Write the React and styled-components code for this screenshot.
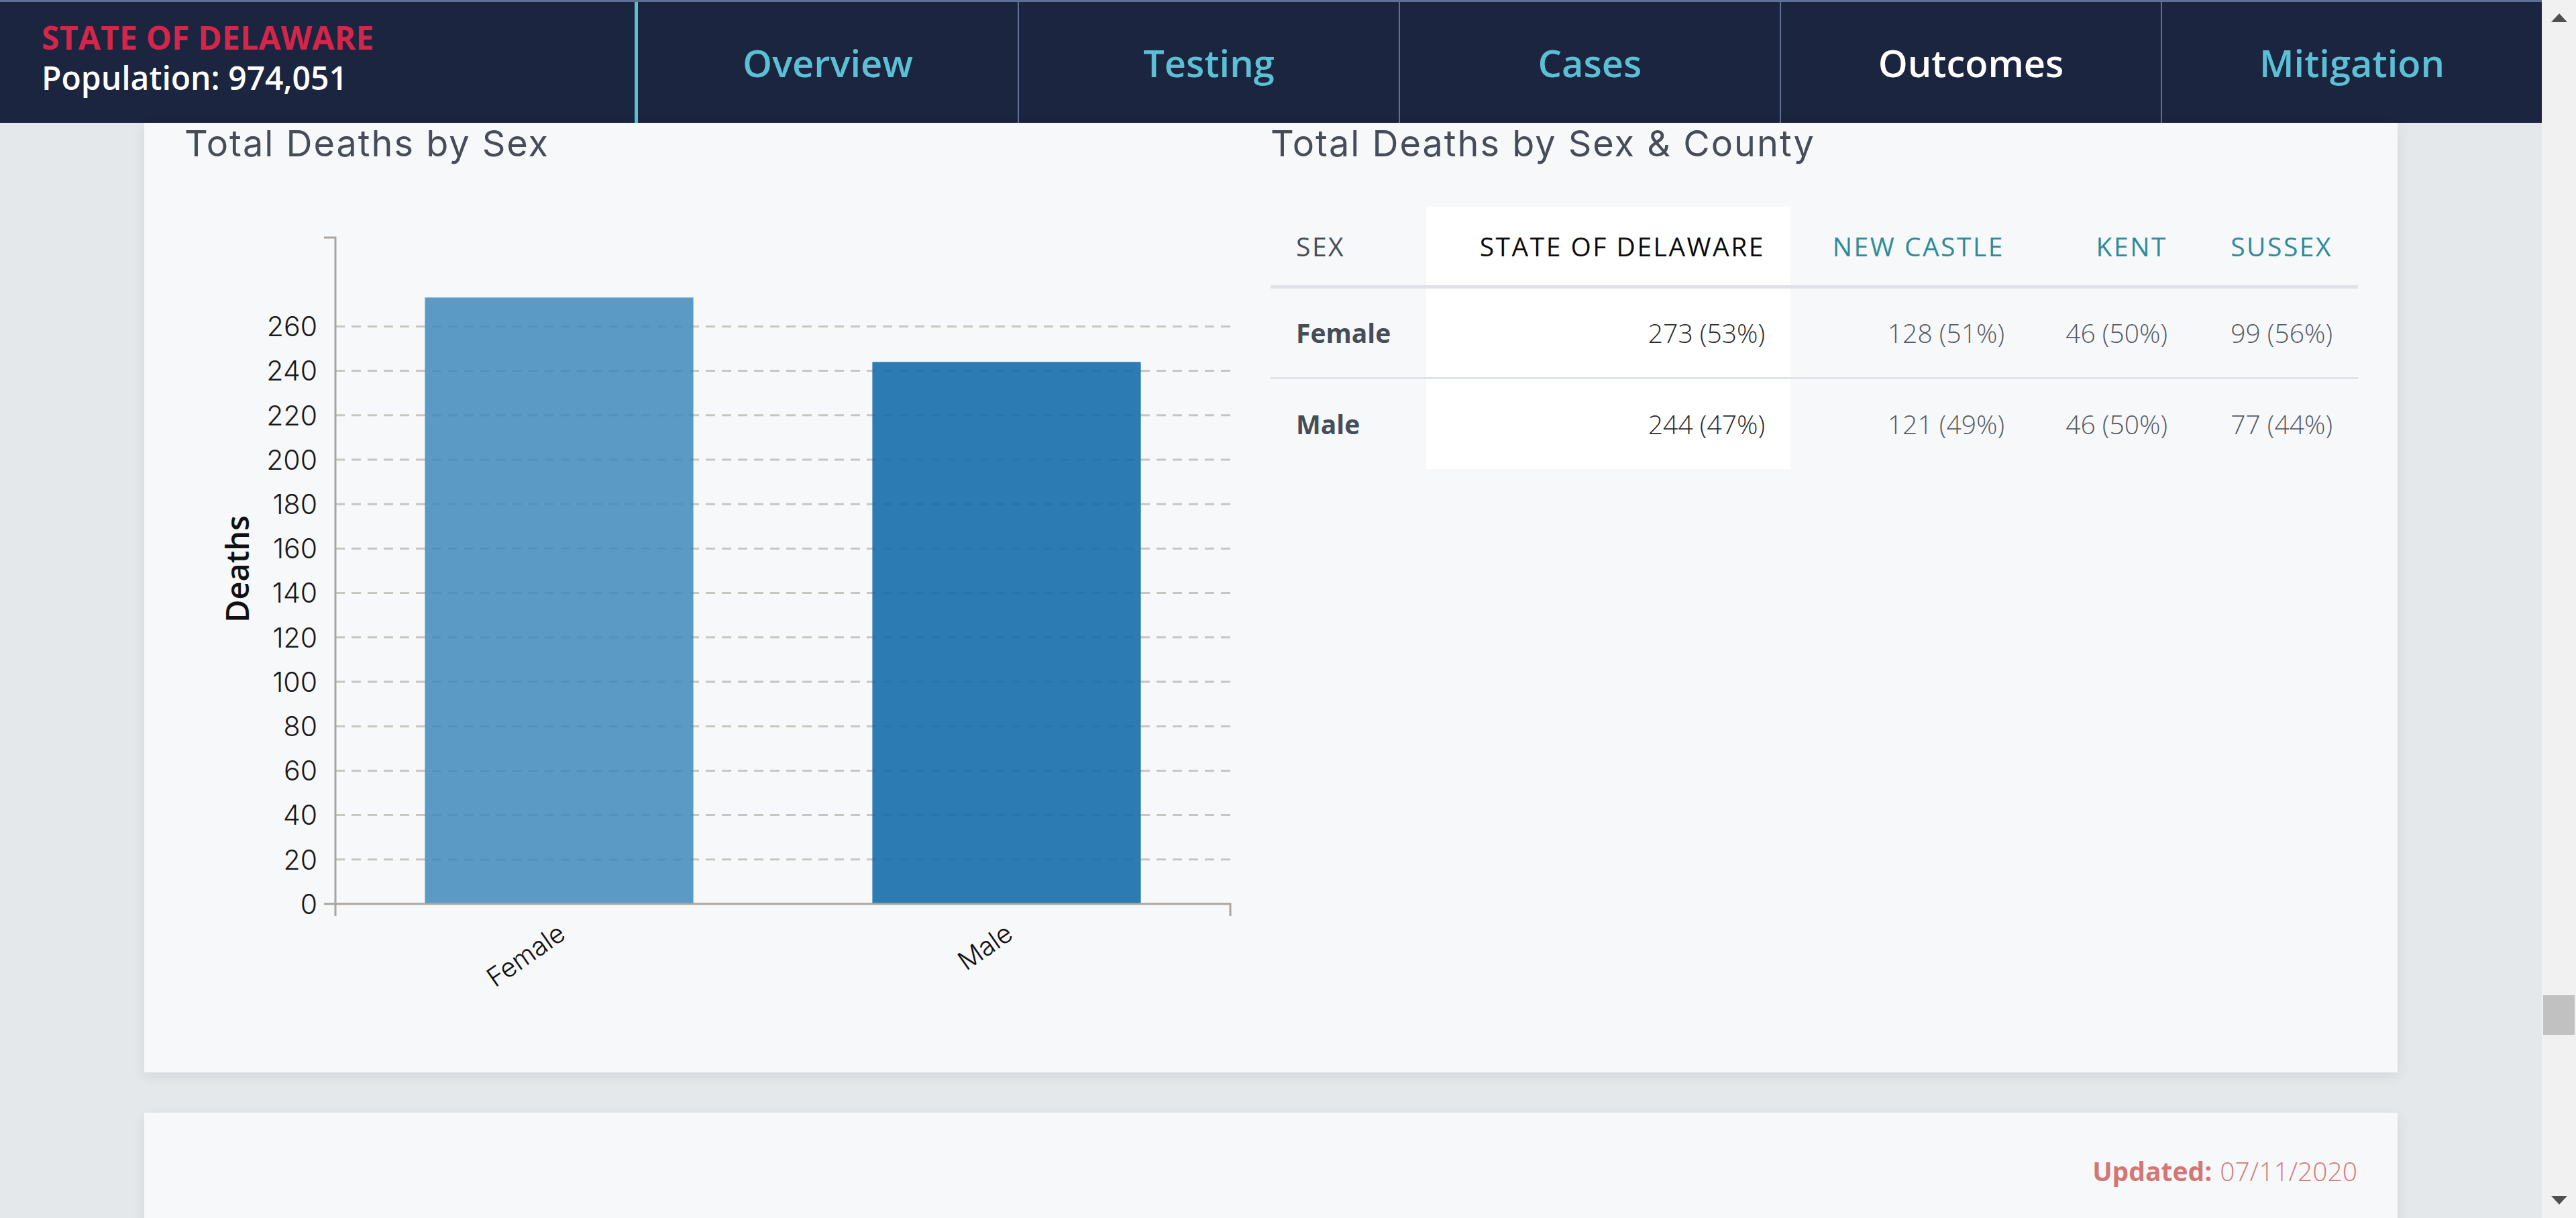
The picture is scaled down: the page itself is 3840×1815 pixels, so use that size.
import React from "react";
import styled, { createGlobalStyle } from "styled-components";

const GlobalStyle = createGlobalStyle`
  html, body {
    margin: 0;
    padding: 0;
    overflow: hidden;
    font-family: "Open Sans", "Liberation Sans", sans-serif;
  }
  * {
    box-sizing: border-box;
  }
`;

const Shell = styled.div`
  display: flex;
  height: 100vh;
  overflow: hidden;
`;

const Main = styled.div`
  flex: 1;
  display: flex;
  flex-direction: column;
  background-color: #e4e8eb;
  overflow: hidden;
`;

const Header = styled.header`
  display: flex;
  flex-shrink: 0;
  height: 183px;
  background-color: #1b253f;
  border-top: 3px solid #5e7096;
`;

const Brand = styled.div`
  width: 951px;
  padding: 23px 0 0 62px;
  border-right: 5px solid #5bc0d4;
`;

const StateName = styled.div`
  font-size: 48px;
  line-height: 60px;
  font-weight: 700;
  letter-spacing: 0.2px;
  color: #d5254a;
`;

const Population = styled.div`
  font-size: 48px;
  line-height: 60px;
  font-weight: 600;
  color: #ffffff;
`;

const Nav = styled.nav`
  flex: 1;
  display: flex;
`;

const NavItem = styled.a`
  flex: 1;
  display: flex;
  align-items: center;
  justify-content: center;
  font-size: 56px;
  font-weight: 600;
  color: ${(p) => (p.$active ? "#ffffff" : "#5bc0d4")};
  text-decoration: none;

  & + & {
    border-left: 2px solid #5e7096;
  }
`;

const Content = styled.div`
  padding: 0 215px;
`;

const Card = styled.section`
  background-color: #f7f8fa;
  box-shadow: 0 6px 18px rgba(30, 40, 60, 0.09);
  margin-top: ${(p) => (p.$first ? "0" : "60px")};
  padding: ${(p) => (p.$first ? "0 60px 63px" : "58px 60px 60px")};
`;

const ChartGrid = styled.div`
  display: grid;
  grid-template-columns: 1619px 1621px;
`;

const Column = styled.div`
  display: flex;
  flex-direction: column;
`;

const Title = styled.h2`
  margin: 0;
  font-family: Inter, "Noto Sans", sans-serif;
  font-size: 54px;
  line-height: 62px;
  font-weight: 400;
  letter-spacing: 2px;
  color: #464d59;
`;

const Table = styled.table`
  margin-top: 63px;
  width: 1621px;
  border-collapse: collapse;
  table-layout: fixed;
`;

const HeadCell = styled.th`
  height: 119px;
  padding: 0 38px;
  font-size: 39px;
  font-weight: ${(p) => (p.$state ? 500 : 400)};
  letter-spacing: 2.5px;
  text-align: ${(p) => (p.$left ? "left" : "right")};
  color: ${(p) => (p.$state ? "#0c0c0c" : p.$left ? "#464d59" : "#2e8b9b")};
  background-color: ${(p) => (p.$state ? "#ffffff" : "transparent")};
  border-bottom: 5px solid #dfe2e6;
  white-space: nowrap;
`;

const BodyRow = styled.tr`
  &:not(:last-child) > td {
    border-bottom: 3px solid #dfe2e6;
  }
`;

const Cell = styled.td`
  height: 136px;
  padding: 0 38px;
  font-size: 39px;
  font-weight: ${(p) => (p.$label ? 700 : 300)};
  text-align: ${(p) => (p.$label ? "left" : "right")};
  color: ${(p) => (p.$label ? "#464d59" : p.$state ? "#2a2a2a" : "#555b64")};
  background-color: ${(p) => (p.$state ? "#ffffff" : "transparent")};
  white-space: nowrap;
`;

const Updated = styled.p`
  margin: 0;
  text-align: right;
  font-size: 39px;
  line-height: 58px;
  font-weight: 300;
  color: #d27b79;

  strong {
    font-weight: 700;
    color: #d47774;
    margin-right: 12px;
  }
`;

const ScrollTrack = styled.div`
  width: 51px;
  flex-shrink: 0;
  display: flex;
  flex-direction: column;
  align-items: center;
  background-color: #f1f1f1;
`;

const Arrow = styled.div`
  width: 0;
  height: 0;
  border-left: 12px solid transparent;
  border-right: 12px solid transparent;
  ${(p) =>
    p.$down
      ? "border-top: 13px solid #505050; margin: auto 0 20px;"
      : "border-bottom: 13px solid #505050; margin-top: 20px;"}
`;

const Thumb = styled.div`
  width: 47px;
  height: 59px;
  margin-top: ${(p) => p.$offset}px;
  background-color: #c1c1c1;
`;

const NAV = ["Overview", "Testing", "Cases", "Outcomes", "Mitigation"];

const BARS = [
  { label: "Female", value: 273, color: "#5b9ac4" },
  { label: "Male", value: 244, color: "#2c7bb3" },
];

const COLUMNS = ["STATE OF DELAWARE", "NEW CASTLE", "KENT", "SUSSEX"];

const ROWS = [
  { sex: "Female", values: ["273 (53%)", "128 (51%)", "46 (50%)", "99 (56%)"] },
  { sex: "Male", values: ["244 (47%)", "121 (49%)", "46 (50%)", "77 (44%)"] },
];

// chart geometry, in svg pixels
const X0 = 225;
const X1 = 1559;
const Y0 = 1102;
const YTOP = 109;
const MAX = 300;
const yOf = (v) => Y0 - ((Y0 - YTOP) * v) / MAX;
const STEP = (X1 - X0) / (BARS.length - 0.4 + 0.4);
const BAND = STEP * 0.6;
const TICKS = Array.from({ length: 14 }, (_, i) => i * 20);

const DeathsChart = () => {
  const grid = (stroke) =>
    TICKS.slice(1).map((t) => (
      <line
        key={t}
        x1={X0}
        x2={X1}
        y1={yOf(t)}
        y2={yOf(t)}
        stroke={stroke}
        strokeWidth="3"
        strokeDasharray="14 10"
      />
    ));

  return (
    <svg width="1619" height="1290" style={{ display: "block" }}>
      {grid("#d6d2cc")}
      {BARS.map((b, i) => {
        const x = X0 + STEP * 0.2 + i * STEP;
        return (
          <rect
            key={b.label}
            x={x}
            y={yOf(b.value)}
            width={BAND}
            height={Y0 - yOf(b.value)}
            fill={b.color}
          />
        );
      })}
      {grid("rgba(10, 40, 70, 0.07)")}

      <g fill="none" stroke="#aaa5a0" strokeWidth="3">
        <path d={`M${X0 - 17},${YTOP}H${X0}V${Y0}H${X0 - 17}`} />
        <path d={`M${X0},${Y0 + 18}V${Y0}H${X1}V${Y0 + 18}`} />
      </g>

      <g
        fontFamily="Inter, 'Noto Sans', sans-serif"
        fontWeight="300"
        fontSize="41"
        fill="#1a1a1a"
        textAnchor="end"
      >
        {TICKS.map((t) => (
          <text key={t} x={X0 - 27} y={yOf(t)} dy="0.36em">
            {t}
          </text>
        ))}
      </g>

      <g
        fontFamily="Inter, 'Noto Sans', sans-serif"
        fontWeight="300"
        fontSize="39"
        fill="#111"
        textAnchor="end"
      >
        {BARS.map((b, i) => {
          const cx = X0 + STEP * 0.2 + i * STEP + BAND / 2 + 12;
          return (
            <text key={b.label} transform={`translate(${cx},${Y0 + 50}) rotate(-35)`}>
              {b.label}
            </text>
          );
        })}
      </g>

      <text
        transform="translate(78,603) rotate(-90)"
        textAnchor="middle"
        dominantBaseline="central"
        fontFamily="'Open Sans', sans-serif"
        fontWeight="600"
        fontSize="47"
        fill="#111"
      >
        Deaths
      </text>
    </svg>
  );
};

const App = () => {
  return (
    <>
      <GlobalStyle />
      <Shell>
        <Main>
          <Header>
            <Brand>
              <StateName>STATE OF DELAWARE</StateName>
              <Population>Population: 974,051</Population>
            </Brand>
            <Nav>
              {NAV.map((n) => (
                <NavItem key={n} href="#" $active={n === "Outcomes"}>
                  {n}
                </NavItem>
              ))}
            </Nav>
          </Header>
          <Content>
            <Card $first>
              <ChartGrid>
                <Column>
                  <Title>Total Deaths by Sex</Title>
                  <DeathsChart />
                </Column>
                <Column>
                  <Title>Total Deaths by Sex &amp; County</Title>
                  <Table>
                    <colgroup>
                      <col style={{ width: 232 }} />
                      <col style={{ width: 543 }} />
                      <col style={{ width: 357 }} />
                      <col style={{ width: 243 }} />
                      <col style={{ width: 246 }} />
                    </colgroup>
                    <thead>
                      <tr>
                        <HeadCell $left>SEX</HeadCell>
                        {COLUMNS.map((c, i) => (
                          <HeadCell key={c} $state={i === 0}>
                            {c}
                          </HeadCell>
                        ))}
                      </tr>
                    </thead>
                    <tbody>
                      {ROWS.map((r) => (
                        <BodyRow key={r.sex}>
                          <Cell $label>{r.sex}</Cell>
                          {r.values.map((v, i) => (
                            <Cell key={i} $state={i === 0}>
                              {v}
                            </Cell>
                          ))}
                        </BodyRow>
                      ))}
                    </tbody>
                  </Table>
                </Column>
              </ChartGrid>
            </Card>
            <Card>
              <Updated>
                <strong>Updated:</strong>07/11/2020
              </Updated>
            </Card>
          </Content>
        </Main>
        <ScrollTrack>
          <Arrow />
          <Thumb $offset={1450} />
          <Arrow $down />
        </ScrollTrack>
      </Shell>
    </>
  );
};

export default App;
